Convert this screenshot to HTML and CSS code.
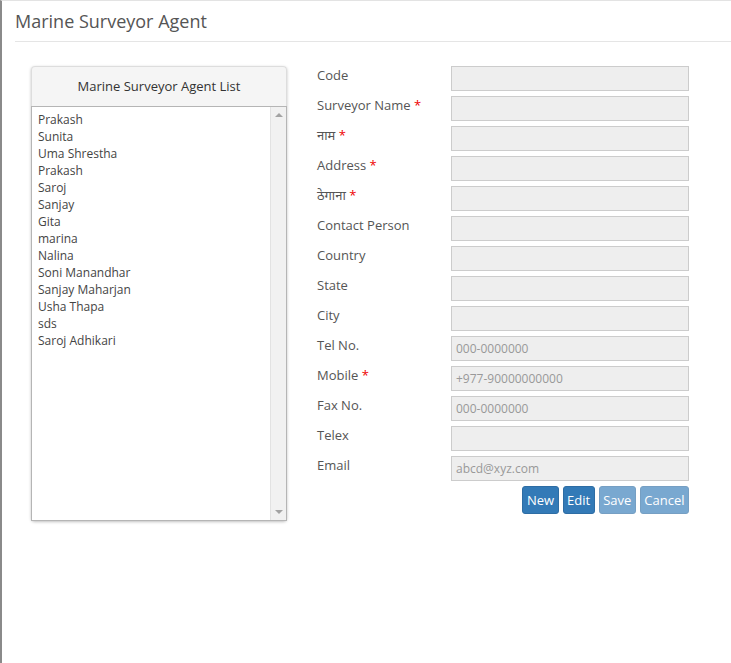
FILE: index.html
```html
<!DOCTYPE html>
<html>
<head>
<meta charset="utf-8">
<link rel="stylesheet" href="styles.css">
</head>
<body>
<div class="page">
  <div class="header"><h1 class="title">Marine Surveyor Agent</h1></div>
  <div class="content">
    <div class="panel">
      <div class="panel-head">Marine Surveyor Agent List</div>
      <div class="listbox">
        <ul class="items">
          <li>Prakash</li>
          <li>Sunita</li>
          <li>Uma Shrestha</li>
          <li>Prakash</li>
          <li>Saroj</li>
          <li>Sanjay</li>
          <li>Gita</li>
          <li>marina</li>
          <li>Nalina</li>
          <li>Soni Manandhar</li>
          <li>Sanjay Maharjan</li>
          <li>Usha Thapa</li>
          <li>sds</li>
          <li>Saroj Adhikari</li>
        </ul>
        <div class="scrollbar">
          <span class="arrow up"></span>
          <span class="arrow down"></span>
        </div>
      </div>
    </div>
    <div class="form">
      <div class="row"><label class="lbl">Code</label><div class="input"></div></div>
      <div class="row"><label class="lbl">Surveyor Name <span class="req">*</span></label><div class="input"></div></div>
      <div class="row"><label class="lbl">नाम <span class="req">*</span></label><div class="input"></div></div>
      <div class="row"><label class="lbl">Address <span class="req">*</span></label><div class="input"></div></div>
      <div class="row"><label class="lbl">ठेगाना <span class="req">*</span></label><div class="input"></div></div>
      <div class="row"><label class="lbl">Contact Person</label><div class="input"></div></div>
      <div class="row"><label class="lbl">Country</label><div class="input"></div></div>
      <div class="row"><label class="lbl">State</label><div class="input"></div></div>
      <div class="row"><label class="lbl">City</label><div class="input"></div></div>
      <div class="row"><label class="lbl">Tel No.</label><div class="input ph">000-0000000</div></div>
      <div class="row"><label class="lbl">Mobile <span class="req">*</span></label><div class="input ph">+977-90000000000</div></div>
      <div class="row"><label class="lbl">Fax No.</label><div class="input ph">000-0000000</div></div>
      <div class="row"><label class="lbl">Telex</label><div class="input"></div></div>
      <div class="row"><label class="lbl">Email</label><div class="input ph">abcd@xyz.com</div></div>
      <div class="buttons">
        <button class="btn">New</button>
        <button class="btn">Edit</button>
        <button class="btn disabled">Save</button>
        <button class="btn disabled">Cancel</button>
      </div>
    </div>
  </div>
</div>
</body>
</html>
```
FILE: styles.css
```css
html, body {
  margin: 0;
  padding: 0;
  background: #fff;
}
body {
  font-family: "Open Sans", "Noto Sans", "DejaVu Sans", sans-serif;
  color: #555;
}
.page {
  min-height: 663px;
  box-sizing: border-box;
  border-left: 2px solid #8a8a8a;
  border-top: 1px solid #e3e3e3;
}
.header {
  margin-left: 13px;
  height: 41px;
  border-bottom: 1px solid #e5e5e5;
  box-sizing: border-box;
}
.title {
  margin: 0;
  padding-top: 9px;
  font-size: 18px;
  font-weight: 400;
  line-height: 22px;
  color: #555;
}
.content {
  display: flex;
  align-items: flex-start;
  padding-left: 29px;
  margin-top: 24px;
}
.panel {
  width: 256px;
  box-shadow: 0 1px 3px rgba(0,0,0,0.25);
  border-radius: 4px;
}
.panel-head {
  height: 40px;
  box-sizing: border-box;
  border: 1px solid #ddd;
  border-bottom: none;
  border-radius: 4px 4px 0 0;
  background: #f5f5f5;
  color: #333;
  font-size: 13px;
  line-height: 39px;
  text-align: center;
}
.listbox {
  display: flex;
  height: 415px;
  box-sizing: border-box;
  border: 1px solid #b5b5b5;
  background: #fff;
}
.items {
  flex: 1;
  list-style: none;
  margin: 0;
  padding: 4px 0 0 6px;
  font-size: 12px;
  line-height: 17px;
  color: #444;
}
.scrollbar {
  width: 15px;
  background: #f1f1f1;
  border-left: 1px solid #e2e2e2;
  display: flex;
  flex-direction: column;
  justify-content: space-between;
  align-items: center;
  padding: 6px 0;
}
.arrow {
  width: 0;
  height: 0;
  border-left: 4px solid transparent;
  border-right: 4px solid transparent;
}
.arrow.up { border-bottom: 4px solid #a3a3a3; }
.arrow.down { border-top: 4px solid #a3a3a3; }
.form {
  margin-left: 30px;
  width: 372px;
  display: flex;
  flex-direction: column;
  gap: 5px;
}
.row {
  display: flex;
  height: 25px;
}
.lbl {
  width: 134px;
  font-size: 13px;
  line-height: 18px;
  color: #555;
}
.req { color: #e00; }
.input {
  width: 238px;
  box-sizing: border-box;
  height: 25px;
  background: #eee;
  border: 1px solid #ccc;
  font-size: 12px;
  line-height: 23px;
  padding-left: 4px;
}
.ph { color: #999; }
.buttons {
  display: flex;
  justify-content: flex-end;
  gap: 4px;
}
.btn {
  height: 28px;
  box-sizing: border-box;
  padding: 0 3.5px;
  font-family: inherit;
  font-size: 13px;
  color: #fff;
  background: #337ab7;
  border: 1px solid #2e6da4;
  border-radius: 3px;
}
.btn.disabled {
  opacity: 0.65;
}
```
